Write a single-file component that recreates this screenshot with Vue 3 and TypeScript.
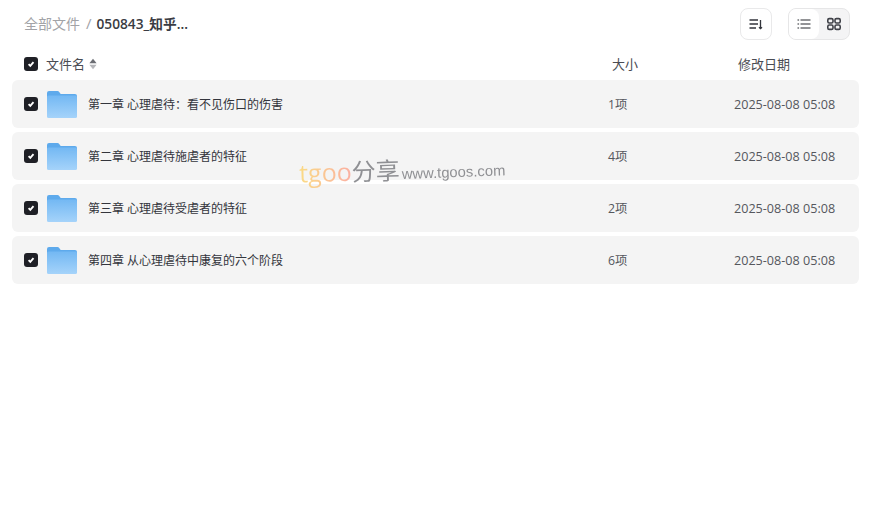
<template>
  <div class="page">
    <header class="topbar">
      <nav class="crumbs">
        <span class="crumb-root">全部文件</span>
        <span class="crumb-sep">/</span>
        <span class="crumb-current">050843_知乎...</span>
      </nav>
      <div class="tools">
        <button class="tool-btn" type="button" aria-label="排序">
          <svg width="14" height="14" viewBox="0 0 14 14" fill="none" stroke="#33353c" stroke-width="1.3">
            <path d="M0.5 3h8.5M0.5 7h8.5M0.5 11h6.5" />
            <path d="M11.5 3v8.5M10 10.2l1.5 1.5 1.5-1.5" />
          </svg>
        </button>
        <div class="view-switch">
          <button class="view-btn view-on" type="button" aria-label="列表">
            <svg width="14" height="14" viewBox="0 0 14 14" fill="none" stroke="#26282e" stroke-width="1.2">
              <path d="M3.5 3h10M3.5 7h10M3.5 11h10" />
              <path d="M0.5 3h1.6M0.5 7h1.6M0.5 11h1.6" />
            </svg>
          </button>
          <button class="view-btn" type="button" aria-label="网格">
            <svg width="14" height="14" viewBox="0 0 14 14" fill="none" stroke="#3f4148" stroke-width="1.6">
              <rect x="0.8" y="1.6" width="5.2" height="4.4" rx="1.4" />
              <rect x="8" y="1.6" width="5.2" height="4.4" rx="1.4" />
              <rect x="0.8" y="8" width="5.2" height="4.4" rx="1.4" />
              <rect x="8" y="8" width="5.2" height="4.4" rx="1.4" />
            </svg>
          </button>
        </div>
      </div>
    </header>

    <div class="head-row">
      <span class="check">
        <svg width="10" height="10" viewBox="0 0 10 10" fill="none" stroke="#fff" stroke-width="1.9">
          <path d="M2.6 5.2l1.7 1.7L7.5 3.2" />
        </svg>
      </span>
      <span class="head-name">
        文件名
        <svg class="sort-mark" width="8" height="12" viewBox="0 0 8 12">
          <path d="M4 0.8L7.6 5.2H0.4z" fill="#6b6d73" />
          <path d="M4 11.2L0.4 6.8h7.2z" fill="#b5b6ba" />
        </svg>
      </span>
      <span class="head-size">大小</span>
      <span class="head-date">修改日期</span>
    </div>

    <ul class="list">
      <li v-for="row in rows" :key="row.name" class="row">
        <span class="check">
          <svg width="10" height="10" viewBox="0 0 10 10" fill="none" stroke="#fff" stroke-width="1.9">
            <path d="M2.6 5.2l1.7 1.7L7.5 3.2" />
          </svg>
        </span>
        <svg class="folder" width="30" height="27" viewBox="0 0 30 27">
          <path d="M0 2a2 2 0 0 1 2-2h8.5c.8 0 1.2.4 1.7 1l1.5 2H28a2 2 0 0 1 2 2v4H0z" fill="#5eaaec" />
          <rect x="0" y="4.5" width="30" height="22.5" rx="1.5" fill="url(#folderFill)" />
          <rect x="23" y="8" width="4" height="2" fill="#7fbdf2" />
          <defs>
            <linearGradient id="folderFill" x1="0" y1="0" x2="0" y2="1">
              <stop offset="0" stop-color="#73b8f3" />
              <stop offset="1" stop-color="#a5d3fa" />
            </linearGradient>
          </defs>
        </svg>
        <span class="name">{{ row.name }}</span>
        <span class="size">{{ row.size }}</span>
        <span class="date">{{ row.date }}</span>
      </li>
    </ul>

    <div class="watermark" aria-hidden="true">
      <span class="wm-tgoo">tgoo</span><span class="wm-cn">分享</span><span class="wm-url">www.tgoos.com</span>
    </div>
  </div>
</template>

<script setup lang="ts">
type Row = {
  name: string;
  size: string;
  date: string;
};

const rows: Row[] = [
  { name: "第一章 心理虐待：看不见伤口的伤害", size: "1项", date: "2025-08-08 05:08" },
  { name: "第二章 心理虐待施虐者的特征", size: "4项", date: "2025-08-08 05:08" },
  { name: "第三章 心理虐待受虐者的特征", size: "2项", date: "2025-08-08 05:08" },
  { name: "第四章 从心理虐待中康复的六个阶段", size: "6项", date: "2025-08-08 05:08" },
];
</script>

<style>
html,
body {
  margin: 0;
  background: #fff;
}
</style>

<style scoped>
.page {
  position: relative;
  width: 874px;
  height: 514px;
  overflow: hidden;
  background: #fff;
  font-family: "Open Sans", "Noto Sans CJK SC", sans-serif;
  color: #33353c;
}

.topbar {
  display: flex;
  justify-content: space-between;
  align-items: center;
  height: 32px;
  padding: 8px 24px 0;
}

.crumbs {
  display: flex;
  align-items: center;
  height: 32px;
  margin-top: -3px;
  font-size: 14px;
}

.crumb-root {
  color: #a2a3a7;
}

.crumb-sep {
  margin: 0 5px 0 6px;
  color: #a2a3a7;
  font-size: 15px;
}

.crumb-current {
  color: #3a3c43;
  font-size: 13.7px;
  font-weight: 600;
}

.tools {
  display: flex;
  gap: 16px;
}

.tool-btn,
.view-btn {
  display: flex;
  align-items: center;
  justify-content: center;
  padding: 0;
  border: 0;
  background: none;
}

.tool-btn {
  width: 32px;
  height: 32px;
  box-sizing: border-box;
  border: 1px solid #e9e9ea;
  border-radius: 8px;
}

.view-switch {
  display: flex;
  box-sizing: border-box;
  width: 62px;
  height: 32px;
  border: 1px solid #e6e6e7;
  border-radius: 8px;
  overflow: hidden;
  background: #f4f4f5;
}

.view-btn {
  width: 30px;
}

.view-on {
  background: #fff;
  border-radius: 0 8px 8px 0;
}

.head-row {
  display: flex;
  align-items: center;
  height: 24px;
  margin-top: 12px;
  padding: 0 24px;
  font-size: 13px;
  line-height: 22px;
  color: #4a4c53;
}

.check {
  display: flex;
  flex: none;
  align-items: center;
  justify-content: center;
  width: 14px;
  height: 14px;
  border-radius: 3px;
  background: #1f2026;
}

.head-name {
  display: flex;
  align-items: center;
  gap: 4px;
  width: 566px;
  margin-left: 8px;
}

.head-size {
  width: 126px;
}

.list {
  display: flex;
  flex-direction: column;
  gap: 4px;
  margin: 4px 15px 0 12px;
  padding: 0;
  list-style: none;
}

.row {
  display: flex;
  align-items: center;
  height: 48px;
  padding-left: 12px;
  border-radius: 6px;
  background: #f4f4f4;
  font-size: 12px;
}

.folder {
  flex: none;
  margin-left: 9px;
}

.name {
  width: 520px;
  margin-left: 11px;
  color: #33353c;
}

.size {
  width: 126px;
  color: #55575d;
  font-size: 12.3px;
}

.date {
  color: #55575d;
  font-size: 12.6px;
}

.watermark {
  position: absolute;
  left: 299px;
  top: 151px;
  display: flex;
  align-items: baseline;
  white-space: nowrap;
  opacity: 0.9;
  transform: rotate(-2deg);
  font-family: "Open Sans", "Noto Sans CJK SC", sans-serif;
  color: #85868a;
}

.wm-tgoo {
  font-size: 25px;
  font-weight: 500;
  background: linear-gradient(90deg, #fbd97a, #fca89a);
  -webkit-background-clip: text;
  background-clip: text;
  color: transparent;
}

.wm-cn {
  font-size: 24px;
}

.wm-url {
  margin-left: 2px;
  font-family: "Liberation Sans", sans-serif;
  font-size: 14.8px;
}
</style>
